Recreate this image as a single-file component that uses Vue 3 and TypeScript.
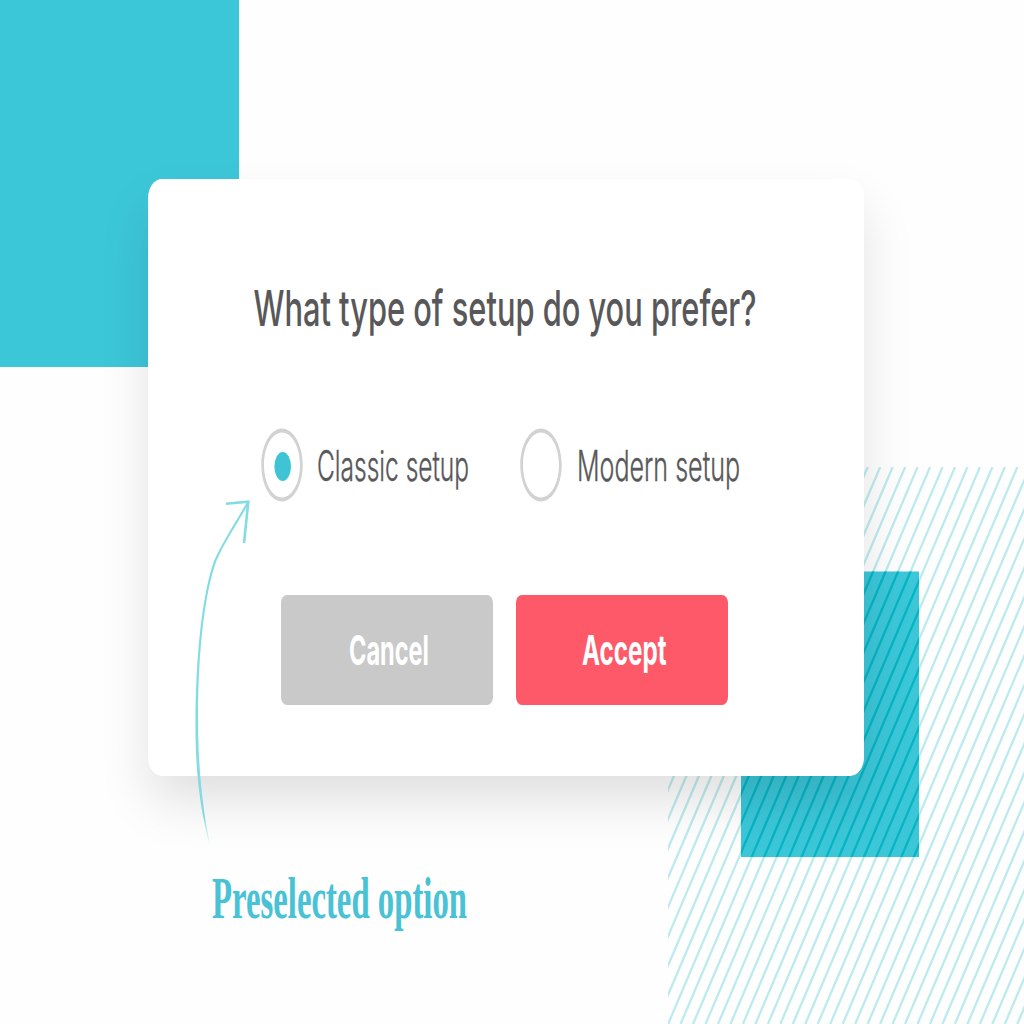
<script setup lang="ts">
import { ref } from 'vue'

interface Option {
  id: string
  label: string
  width: number
}

const options: Option[] = [
  { id: 'classic', label: 'Classic setup', width: 152 },
  { id: 'modern', label: 'Modern setup', width: 163 },
]
const selected = ref('classic')

// Diagonal hatch: evenly spaced slanted lines across a 356 x 557 area
const hatch: string = Array.from({ length: 50 }, (_, i) => {
  const x = 0.2 + i * 12.47
  return `M${x.toFixed(2)} 0L${(x - 237).toFixed(2)} 557`
}).join('')
</script>

<template>
  <main class="scene">
    <div class="block-top"></div>
    <svg class="hatch" width="356" height="557" viewBox="0 0 356 557">
      <clipPath id="box"><rect x="73" y="104.5" width="178" height="285.5" /></clipPath>
      <path :d="hatch" class="line" />
      <rect x="73" y="104.5" width="178" height="285.5" fill="#3cc7d9" />
      <path :d="hatch" class="line dark" clip-path="url(#box)" />
    </svg>

    <section class="card">
      <h1 class="title">
        <svg width="510" height="70">
          <text x="0.500" y="52" textLength="503" lengthAdjust="spacingAndGlyphs">What type of setup do you prefer?</text>
        </svg>
      </h1>
      <div class="options">
        <div v-for="o in options" :key="o.id" class="option" @click="selected = o.id">
          <svg class="radio" width="42" height="74" viewBox="0 0 42 74">
            <path
              fill="#d2d2d2"
              fill-rule="evenodd"
              d="M21 .5C32.5.5 41.7 17 41.7 37S32.5 73.500 21 73.500.3 57 .3 37 9.500.5 21 .5ZM21 4.500C11 4.500 3 19 3 37S11 69.500 21 69.500 39 55 39 37 31 4.500 21 4.500Z"
            />
            <ellipse v-if="selected === o.id" cx="21.700" cy="38.500" rx="8.300" ry="14.500" fill="#3fc4d6" />
          </svg>
          <svg class="label" :width="o.width" height="50">
            <text x="0" y="41" :textLength="o.width" lengthAdjust="spacingAndGlyphs">{{ o.label }}</text>
          </svg>
        </div>
      </div>
      <div class="actions">
        <button class="btn cancel">
          <svg width="81" height="50">
            <text x="0" y="39.500" textLength="80" lengthAdjust="spacingAndGlyphs">Cancel</text>
          </svg>
        </button>
        <button class="btn accept">
          <svg width="85" height="50">
            <text x="0" y="39.500" textLength="84.500" lengthAdjust="spacingAndGlyphs">Accept</text>
          </svg>
        </button>
      </div>
    </section>

    <p class="note">
      <svg width="256" height="70">
        <text x="0" y="51" textLength="255" lengthAdjust="spacingAndGlyphs">Preselected option</text>
      </svg>
    </p>

    <svg class="arrow" width="90" height="370" viewBox="0 0 90 370">
      <defs>
        <linearGradient id="fade" gradientUnits="userSpaceOnUse" x1="0" y1="280" x2="0" y2="363">
          <stop offset="0" stop-color="#83dce2" />
          <stop offset=".6" stop-color="#83d8de" />
          <stop offset="1" stop-color="#b5eaee" stop-opacity=".4" />
        </linearGradient>
      </defs>
      <path
        fill="url(#fade)"
        d="M67 17C57 35 43 56 34 76C22 110 15 174 15.500 250C16 292 21 330 30.500 362C24 332 19 292 18.200 250C17 174 24 111 36 77C45 56 59 36 69 18Z"
      />
      <path d="M46 18.800L68.300 16.800L64 58" fill="none" stroke="#83dce2" stroke-width="2.600" />
    </svg>
  </main>
</template>

<style>
body {
  margin: 0;
  background: #fff;
}
</style>

<style scoped>
.scene {
  position: relative;
  box-sizing: border-box;
  width: 1024px;
  height: 1024px;
  padding: 178.5px 0 0 147.5px;
  overflow: hidden;
  background: #fefefe;
  font-family: Inter, 'Liberation Sans', sans-serif;
}
svg {
  display: block;
  overflow: visible;
}
.block-top {
  position: absolute;
  left: 0;
  top: 0;
  width: 239px;
  height: 366.5px;
  background: #3cc7d9;
}
.hatch {
  position: absolute;
  right: 0;
  bottom: 0;
  overflow: hidden;
}
.line {
  fill: none;
  stroke: #bdebed;
  stroke-width: 2.3;
}
.line.dark {
  stroke: #06b4c4;
}
.card {
  position: relative;
  box-sizing: border-box;
  width: 716.5px;
  height: 597.5px;
  padding-top: 95.5px;
  border-radius: 14px / 19px;
  background: #fff;
  box-shadow: 0 27px 52px -3px rgba(0, 0, 0, 0.125);
}
.title {
  margin: 0 0 0 105.5px;
  font-size: 50px;
  font-weight: 500;
  fill: #58585a;
}
.options {
  display: flex;
  gap: 51px;
  margin: 84px 0 0 113px;
}
.option {
  display: flex;
  align-items: center;
  gap: 14.5px;
  cursor: pointer;
}
.label {
  font-size: 42px;
  font-weight: 300;
  fill: #58585a;
  stroke: #58585a;
  stroke-width: 0.4px;
}
.actions {
  display: flex;
  gap: 23px;
  margin: 93px 0 0 133.5px;
}
.btn {
  display: flex;
  align-items: center;
  justify-content: center;
  width: 212px;
  height: 110px;
  padding: 0 0 0 4px;
  border: 0;
  border-radius: 6px / 8px;
  font-family: inherit;
  font-size: 41px;
  font-weight: 700;
  fill: #fff;
}
.cancel {
  background: #c9c9c9;
}
.accept {
  background: #fd5969;
}
.note {
  margin: 90.5px 0 0 64px;
  font-family: 'Liberation Serif', serif;
  font-size: 59px;
  font-weight: 700;
  fill: #48c2d4;
}
.arrow {
  position: absolute;
  left: 180px;
  top: 485px;
  pointer-events: none;
}
</style>
